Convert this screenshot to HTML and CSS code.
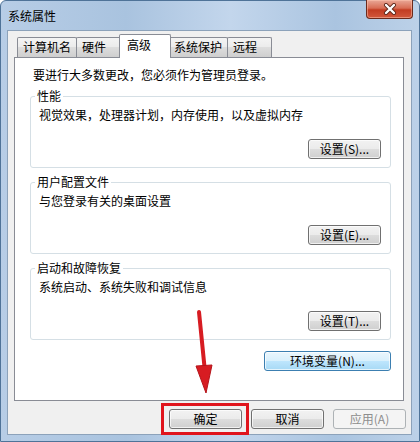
FILE: index.html
```html
<!DOCTYPE html>
<html lang="zh-CN">
<head>
    <meta charset="UTF-8">
    <meta name="viewport" content="width=device-width, initial-scale=1.0">
    <link rel="stylesheet" href="styles.css">
    <title>系统属性</title>
</head>
<body>
    <div class="window">
        <div class="titlebar">
            <span class="title">系统属性</span>
            <div class="close">
                <svg width="16" height="12" viewBox="0 0 16 12">
                    <path d="M4 2 L12 10 M12 2 L4 10" stroke="#5a2418" stroke-width="4" stroke-linecap="round"/>
                    <path d="M4 2 L12 10 M12 2 L4 10" stroke="#ffffff" stroke-width="2.4" stroke-linecap="round"/>
                </svg>
            </div>
        </div>
        <div class="client">
            <ul class="tabs">
                <li class="tab">计算机名</li>
                <li class="tab">硬件</li>
                <li class="tab tab-active">高级</li>
                <li class="tab">系统保护</li>
                <li class="tab">远程</li>
            </ul>
            <div class="panel">
                <p class="intro">要进行大多数更改，您必须作为管理员登录。</p>
                <fieldset class="group">
                    <legend>性能</legend>
                    <p class="group-desc">视觉效果，处理器计划，内存使用，以及虚拟内存</p>
                    <div class="group-actions"><button class="btn">设置(S)...</button></div>
                </fieldset>
                <fieldset class="group">
                    <legend>用户配置文件</legend>
                    <p class="group-desc">与您登录有关的桌面设置</p>
                    <div class="group-actions"><button class="btn">设置(E)...</button></div>
                </fieldset>
                <fieldset class="group">
                    <legend>启动和故障恢复</legend>
                    <p class="group-desc">系统启动、系统失败和调试信息</p>
                    <div class="group-actions"><button class="btn">设置(T)...</button></div>
                </fieldset>
                <div class="env-row"><button class="btn btn-hover env">环境变量(N)...</button></div>
            </div>
            <div class="footer">
                <div class="mark"><button class="btn btn-footer">确定</button></div>
                <button class="btn btn-footer cancel">取消</button>
                <button class="btn btn-footer btn-disabled">应用(A)</button>
            </div>
        </div>
        <svg class="arrow" width="420" height="442" viewBox="0 0 420 442">
            <path d="M199 312 L205 372" stroke="#d71c22" stroke-width="4" stroke-linecap="round"/>
            <path d="M196 366 L212 365 L206 393 Z" fill="#d71c22" stroke="#b5141a" stroke-width="1"/>
        </svg>
    </div>
</body>
</html>
```

FILE: styles.css
```css
* {
    margin: 0;
    padding: 0;
    box-sizing: border-box;
}
body {
    font-family: "Noto Sans CJK SC", "DejaVu Sans", sans-serif;
    font-size: 12px;
    line-height: 16px;
    color: #000;
    background: #fff;
}
.window {
    position: relative;
    width: 420px;
    height: 442px;
    border: 1px solid #4f7398;
    border-radius: 6px 6px 0 0;
    background: linear-gradient(90deg, #b7cde6 0, #a9c3df 30%, #c3d6ec 55%, #aac4e0 80%, #bcd1e8 100%);
}
.titlebar {
    display: flex;
    justify-content: space-between;
    align-items: flex-start;
    height: 29px;
}
.title {
    padding: 7px 0 0 7px;
    color: #000;
}
.close {
    display: flex;
    align-items: center;
    justify-content: center;
    width: 47px;
    height: 19px;
    margin: -1px 6px 0 0;
    border: 1px solid #6b2a1c;
    border-top: none;
    border-radius: 0 0 4px 4px;
    background: linear-gradient(#e9a897 0, #d86d55 45%, #c23c22 55%, #d2583c 100%);
    box-shadow: inset 0 0 0 1px rgba(255, 200, 180, 0.5);
}
.client {
    display: flex;
    flex-direction: column;
    height: 405px;
    margin: 0 7px 0 6px;
    padding: 3px 0 0 0;
    border: 1px solid #8ca2ba;
    background: #f0f0f0;
}
.tabs {
    display: flex;
    align-items: flex-end;
    height: 23px;
    margin-left: 9px;
    list-style: none;
}
.tab {
    min-width: 45px;
    height: 20px;
    margin-left: -1px;
    padding: 1px 5px 0 5px;
    border: 1px solid #898c95;
    border-bottom: none;
    border-radius: 2px 2px 0 0;
    background: linear-gradient(#f4f4f4 0, #ebebeb 50%, #dddddd 50%, #cfcfcf 100%);
}
.tab:first-child {
    margin-left: 0;
    min-width: 60px;
}
.tab-active {
    position: relative;
    z-index: 1;
    min-width: 52px;
    height: 24px;
    margin: 0 -2px -1px -2px;
    padding: 2px 6px 0 7px;
    background: #fff;
}
.panel {
    flex: 1 1 auto;
    display: flex;
    flex-direction: column;
    margin: 0 7px 0 6px;
    padding: 9px 12px 27px 15px;
    border: 1px solid #898c95;
    background: #fff;
}
.intro {
    margin-left: 3px;
}
.group {
    margin-top: 5px;
    padding: 0 9px 8px 8px;
    border: 1px solid #d5dfe5;
    border-radius: 3px;
}
.group + .group {
    margin-top: 6px;
}
.group legend {
    margin-left: -4px;
    padding: 0 2px;
}
.group-desc {
    margin-top: 3px;
}
.group-actions {
    display: flex;
    justify-content: flex-end;
    margin-top: 16px;
}
.btn {
    height: 20px;
    width: 73px;
    font-family: inherit;
    font-size: 12px;
    line-height: 16px;
    color: #000;
    border: 1px solid #707070;
    border-radius: 3px;
    background: linear-gradient(#f2f2f2 0, #ebebeb 50%, #dddddd 50%, #cfcfcf 100%);
    box-shadow: inset 0 0 0 1px rgba(255, 255, 255, 0.7);
}
.env-row {
    display: flex;
    justify-content: flex-end;
    margin-top: 11px;
}
.btn-hover {
    border-color: #3c7fb1;
    background: linear-gradient(#eaf6fd 0, #d9f0fc 50%, #bee6fd 50%, #a7d9f5 100%);
}
.env {
    width: 127px;
}
.footer {
    display: flex;
    justify-content: flex-end;
    align-items: center;
    padding: 2px 5px 0 0;
    height: 33px;
}
.mark {
    display: flex;
    padding: 3px 4px 3px 5px;
    border: 3px solid #e0141c;
}
.cancel {
    margin-left: 2px;
}
.btn-disabled {
    margin-left: 9px;
    color: #8d8d8d;
    border-color: #adb2b5;
    background: #f4f4f4;
    box-shadow: none;
}
.arrow {
    position: absolute;
    left: -1px;
    top: -1px;
    pointer-events: none;
}
```
